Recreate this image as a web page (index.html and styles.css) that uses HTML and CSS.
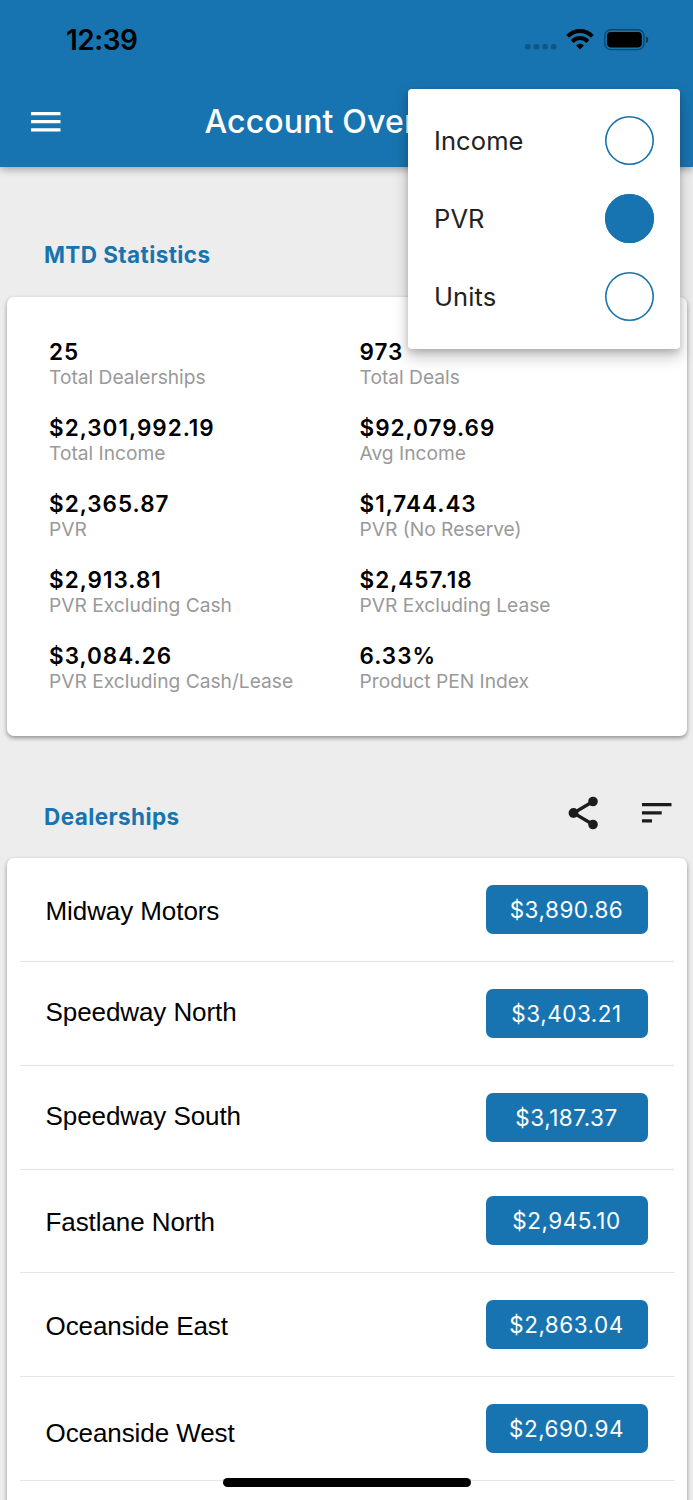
FILE: index.html
```html
<!DOCTYPE html>
<html lang="en">
<head>
    <meta charset="UTF-8">
    <meta name="viewport" content="width=device-width, initial-scale=1.0">
    <title>Account Overview</title>
    <link rel="stylesheet" href="styles.css">
</head>
<body>
    <header class="app-header">
        <div class="status-bar">
            <span class="time">12:39</span>
            <div class="status-icons">
                <svg class="dots" width="32" height="6" viewBox="0 0 32 6"><rect x="0" y="0" width="5.5" height="5.5" rx="1.7"/><rect x="8.7" y="0" width="5.5" height="5.5" rx="1.7"/><rect x="17.3" y="0" width="5.5" height="5.5" rx="1.7"/><rect x="26" y="0" width="5.5" height="5.5" rx="1.7"/></svg>
                <svg class="wifi" width="28" height="21" viewBox="0 0 28 21"><g fill="none" stroke="#000" stroke-width="4"><path d="M1.700 7.400C8.600.3 19.400.3 26.300 7.400"/><path d="M6.100 12.500c4.500-4.600 11.300-4.600 15.800 0"/></g><path d="M14 20.400l-3.900-4c2.200-2.100 5.600-2.100 7.800 0z"/></svg>
                <svg class="battery" width="45" height="22" viewBox="0 0 45 22"><rect x=".8" y=".8" width="39.2" height="19.8" rx="6" fill="none" stroke="#000" stroke-opacity=".4" stroke-width="1.4"/><rect x="3" y="3" width="34.8" height="15.4" rx="3.8"/><path d="M42 7.500c3 1 3 5.600 0 6.600z" opacity=".5"/></svg>
            </div>
        </div>
        <div class="toolbar">
            <svg class="menu-icon" width="30" height="20" viewBox="0 0 30 20"><path d="M0 0h29.500v3.200H0zM0 8.100h29.500v3.200H0zM0 16.200h29.500v3.200H0z" fill="#fff"/></svg>
            <h1>Account Overview</h1>
        </div>

        <!-- Display menu -->
        <div class="popup">
            <div class="option"><span>Income</span><i class="radio"></i></div>
            <div class="option"><span>PVR</span><i class="radio selected"></i></div>
            <div class="option"><span>Units</span><i class="radio"></i></div>
        </div>
    </header>

    <main>
        <div class="section-title stats-title">
            <h2>MTD Statistics</h2>
        </div>
        <section class="card stats">
            <div class="stat"><b>25</b><span>Total Dealerships</span></div>
            <div class="stat"><b>973</b><span>Total Deals</span></div>
            <div class="stat"><b>$2,301,992.19</b><span>Total Income</span></div>
            <div class="stat"><b>$92,079.69</b><span>Avg Income</span></div>
            <div class="stat"><b>$2,365.87</b><span>PVR</span></div>
            <div class="stat"><b>$1,744.43</b><span>PVR (No Reserve)</span></div>
            <div class="stat"><b>$2,913.81</b><span>PVR Excluding Cash</span></div>
            <div class="stat"><b>$2,457.18</b><span>PVR Excluding Lease</span></div>
            <div class="stat"><b>$3,084.26</b><span>PVR Excluding Cash/Lease</span></div>
            <div class="stat"><b>6.33%</b><span>Product PEN Index</span></div>
        </section>

        <div class="section-title list-title">
            <h2>Dealerships</h2>
            <div class="actions">
                <svg width="31" height="34" viewBox="0 0 31 34"><path d="M25 5.500L5.500 17 25 28.500" fill="none" stroke="#1c1c1c" stroke-width="3.200"/><g fill="#1c1c1c"><circle cx="25" cy="5.500" r="4.800"/><circle cx="5.500" cy="17" r="4.900"/><circle cx="25" cy="28.500" r="4.800"/></g></svg>
                <svg width="30" height="20" viewBox="0 0 30 20"><path d="M0 0h29.500v3.300H0zM0 8.200h19.700v3.300H0zM0 16.300h10v3.300H0z" fill="#1c1c1c"/></svg>
            </div>
        </div>
        <section class="card list">
            <div class="row"><span class="name">Midway Motors</span><span class="amount">$3,890.86</span></div>
            <div class="row"><span class="name up">Speedway North</span><span class="amount">$3,403.21</span></div>
            <div class="row"><span class="name up">Speedway South</span><span class="amount">$3,187.37</span></div>
            <div class="row"><span class="name">Fastlane North</span><span class="amount">$2,945.10</span></div>
            <div class="row"><span class="name">Oceanside East</span><span class="amount">$2,863.04</span></div>
            <div class="row"><span class="name down">Oceanside West</span><span class="amount">$2,690.94</span></div>
        </section>
    </main>
    <div class="home-bar"></div>
</body>
</html>
```

FILE: styles.css
```css
* {
    box-sizing: border-box;
}

body {
    margin: 0;
    height: 1500px;
    overflow: hidden;
    position: relative;
    background-color: #ededed;
    font-family: Inter, "Liberation Sans", sans-serif;
    color: #000;
}

h1, h2 {
    margin: 0;
}

svg {
    display: block;
}

.app-header {
    position: relative;
    height: 167px;
    background-color: #1874b0;
    box-shadow: 0 2px 8px rgba(0, 0, 0, 0.35);
}

.status-bar {
    display: flex;
    justify-content: space-between;
    height: 78px;
    padding: 0 44px 0 66px;
}

.time {
    line-height: 81px;
    font-size: 28px;
    font-weight: 600;
    letter-spacing: -0.5px;
}

.status-icons {
    display: flex;
    height: 79px;
    align-items: center;
}

.dots {
    margin: 14px 9px 0 0;
    opacity: 0.25;
}

.wifi {
    margin-right: 10px;
}

.toolbar {
    display: flex;
    align-items: center;
    height: 87px;
    padding: 0 31px;
}

.toolbar h1 {
    margin-left: 143.500px;
    font-size: 32px;
    font-weight: 500;
    letter-spacing: 0.150px;
    color: #fff;
    white-space: nowrap;
}

.popup {
    position: absolute;
    z-index: 2;
    top: 89px;
    left: 408px;
    width: 272px;
    height: 260px;
    padding: 13px 26px;
    background-color: #fff;
    border-radius: 4px;
    box-shadow: 0 8px 16px rgba(0, 0, 0, 0.22), 0 3px 6px rgba(0, 0, 0, 0.16);
}

.option {
    display: flex;
    align-items: center;
    justify-content: space-between;
    height: 77.700px;
    font-size: 25.500px;
    letter-spacing: 0.1px;
    color: #222;
}

.radio {
    width: 49px;
    height: 49px;
    border-radius: 50%;
    box-shadow: inset 0 0 0 1.600px #1874b0;
}

.selected {
    background-color: #1874b0;
}

.section-title {
    display: flex;
    justify-content: space-between;
    padding: 0 21px 0 44px;
}

.section-title h2 {
    font-size: 22.500px;
    line-height: 28px;
    font-weight: 650;
    letter-spacing: 0.4px;
    color: #1874b0;
}

.stats-title {
    height: 129.500px;
    padding-top: 74px;
}

.list-title {
    height: 122.500px;
    padding-top: 67px;
}

.actions {
    display: flex;
    gap: 43.500px;
    height: 21px;
    align-items: center;
}

.card {
    margin: 0 6.500px;
    background-color: #fff;
    border-radius: 7px;
    box-shadow: 0 2px 4px rgba(0, 0, 0, 0.4);
}

.stats {
    display: grid;
    grid-template-columns: 310.500px 1fr;
    grid-auto-rows: 76.100px;
    height: 439px;
    padding: 41.200px 0 0 42.500px;
}

.stat b {
    display: block;
    font-size: 22.500px;
    line-height: 27px;
    font-weight: 600;
    letter-spacing: 1px;
}

.stat span {
    display: block;
    font-size: 19.200px;
    line-height: 24px;
    color: #999;
}

.list {
    height: 700px;
    padding: 0.500px 13px;
}

.row {
    display: flex;
    align-items: center;
    justify-content: space-between;
    height: 103.700px;
    padding: 0 26px;
    border-bottom: 1px solid #e4e4e4;
}

.name {
    margin-top: 3px;
    font-family: "Liberation Sans", Arial, sans-serif;
    font-size: 26px;
    letter-spacing: -0.080px;
}

.up {
    margin-top: -2px;
}

.down {
    margin-top: 11px;
}

.amount {
    width: 162px;
    height: 49px;
    line-height: 49px;
    border-radius: 7px;
    background-color: #1874b0;
    color: #fff;
    font-size: 22.500px;
    letter-spacing: 0.5px;
    text-align: center;
}

.home-bar {
    position: absolute;
    left: 223px;
    bottom: 13px;
    width: 248px;
    height: 9px;
    border-radius: 5px;
    background-color: #000;
}
```
